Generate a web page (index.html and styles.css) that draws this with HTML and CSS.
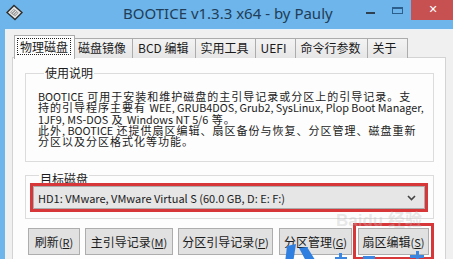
FILE: index.html
```html
<!DOCTYPE html>
<html lang="zh-CN">

<head>
    <meta charset="UTF-8">
    <meta name="viewport" content="width=device-width, initial-scale=1.0">
    <title>BOOTICE v1.3.3 x64 - by Pauly</title>
    <link rel="stylesheet" href="styles.css">
</head>

<body>
    <div class="window">
        <div class="titlebar">
            <svg class="app-icon" width="17" height="17" viewBox="0 0 17 17">
                <polygon points="1,8.5 8,1.5 16,8.5 9,15.5" fill="#e6e6e6" stroke="#2d2d2d" stroke-width="1.4"/>
                <polygon points="4,8.5 8,4.8 12.5,8.8 9,12.4" fill="#9a9a9a"/>
                <line x1="5.5" y1="8.5" x2="8.5" y2="5.8" stroke="#f4f4f4" stroke-width="0.9"/>
                <line x1="7" y1="9.8" x2="10" y2="7" stroke="#f4f4f4" stroke-width="0.9"/>
                <line x1="8.5" y1="11" x2="11.3" y2="8.4" stroke="#f4f4f4" stroke-width="0.9"/>
            </svg>
            <div class="title">BOOTICE v1.3.3 x64 - by Pauly</div>
            <div class="controls">
                <span class="ctl ctl-min"></span>
                <span class="ctl ctl-max"></span>
                <span class="ctl ctl-close">✕</span>
            </div>
        </div>

        <div class="client">
            <div class="tabs">
                <div class="tab active"><span class="focus">物理磁盘</span></div>
                <div class="tab">磁盘镜像</div>
                <div class="tab">BCD 编辑</div>
                <div class="tab">实用工具</div>
                <div class="tab">UEFI</div>
                <div class="tab">命令行参数</div>
                <div class="tab">关于</div>
            </div>

            <div class="panel">
                <div class="group group-info">
                    <div class="group-title">使用说明</div>
                    <p class="info"><span class="en">BOOTICE</span> 可用于安装和维护磁盘的主引导记录或分区上的引导记录。支<br>持的引导程序主要有 <span class="en">WEE, GRUB4DOS, Grub2, SysLinux, Plop Boot Manager,</span><br><span class="en">1JF9, MS-DOS</span> 及 <span class="en">Windows NT 5/6</span> 等。<br>此外<span class="en">, BOOTICE</span> 还提供扇区编辑、扇区备份与恢复、分区管理、磁盘重新<br>分区以及分区格式化等功能。</p>
                </div>

                <div class="group group-disk">
                    <div class="group-title">目标磁盘</div>
                    <div class="combo marked">
                        <span>HD1: VMware, VMware Virtual S (60.0 GB, D: E: F:)</span>
                        <svg class="chevron" width="9" height="6" viewBox="0 0 9 6">
                            <polyline points="1,1 4.5,4.5 8,1" fill="none" stroke="#444" stroke-width="1.6"/>
                        </svg>
                    </div>
                </div>

                <div class="buttons">
                    <button class="btn btn-refresh">刷新<span class="key">(<u>R</u>)</span></button>
                    <button class="btn btn-mbr">主引导记录<span class="key">(<u>M</u>)</span></button>
                    <button class="btn btn-pbr">分区引导记录<span class="key">(<u>P</u>)</span></button>
                    <button class="btn btn-parts">分区管理<span class="key">(<u>G</u>)</span></button>
                    <button class="btn btn-sector marked">扇区编辑<span class="key">(<u>S</u>)</span></button>
                </div>
            </div>

            <div class="watermark">Bai<span class="paw">du</span> 经验</div>
            <svg class="stamp" width="170" height="20" viewBox="0 0 170 20">
                <polygon points="2,3 11,1 8,20 0,20" fill="#2f7fe0"/>
                <polygon points="14,5 22,4 32,20 22,20" fill="#2f7fe0"/>
                <rect x="50" y="14" width="12" height="3" fill="#3b86e0"/>
                <rect x="54" y="10" width="3" height="10" fill="#3b86e0"/>
                <rect x="78" y="13" width="12" height="3" fill="#3b86e0"/>
                <rect x="125" y="12" width="14" height="3" fill="#3b86e0"/>
                <rect x="131" y="8" width="3" height="12" fill="#3b86e0"/>
            </svg>
        </div>
    </div>
</body>

</html>
```

FILE: styles.css
```css
body {
    margin: 0;
    background: #6db5ea;
    font-family: "Noto Sans CJK SC", "Noto Sans", sans-serif;
    font-size: 12px;
    color: #1b1b1b;
    overflow: hidden;
}

.window {
    height: 259px;
    display: flex;
    flex-direction: column;
}

.titlebar {
    height: 29px;
    flex: none;
    display: flex;
    align-items: flex-start;
}

.app-icon {
    margin: 4px 0 0 6px;
}

.title {
    margin: 3px 0 0 100px;
    font-family: "Noto Sans", sans-serif;
    font-size: 15px;
    line-height: 20px;
    color: #213d58;
    white-space: nowrap;
}

.controls {
    margin-left: auto;
    display: flex;
}

.ctl {
    display: block;
    height: 20px;
}

.ctl-min {
    width: 10px;
    margin-right: 17px;
    background: linear-gradient(#2f4150, #2f4150) center 12px / 9px 2px no-repeat;
}

.ctl-max {
    width: 11px;
    margin-right: 8px;
    background:
        linear-gradient(#2c5f8c, #2c5f8c) 0 7px / 11px 2px no-repeat,
        linear-gradient(#2c5f8c, #2c5f8c) 0 7px / 1px 7px no-repeat,
        linear-gradient(#2c5f8c, #2c5f8c) 10px 7px / 1px 7px no-repeat,
        linear-gradient(#2c5f8c, #2c5f8c) 0 13px / 11px 1px no-repeat;
}

.ctl-close {
    width: 42px;
    background: #c75150;
    color: #fff;
    font-family: "DejaVu Sans", sans-serif;
    font-size: 11px;
    line-height: 19px;
    text-align: center;
    text-indent: 2px;
}

.client {
    flex: 1;
    margin-left: 5px;
    background: #f0f0f0;
    border-top: 1px solid #e8f2fa;
    padding: 7px 0 0 7px;
    position: relative;
    overflow: hidden;
}

.tabs {
    display: flex;
    align-items: flex-end;
    height: 21px;
    padding-left: 4px;
    position: relative;
    z-index: 1;
}

.tab {
    box-sizing: border-box;
    min-width: 41px;
    height: 20px;
    padding: 0 6px 0 5px;
    line-height: 18px;
    white-space: nowrap;
    background: linear-gradient(#f3f3f3, #e6e6e6);
    border: 1px solid #acacac;
    border-bottom: none;
    margin-left: -1px;
}

.tab.active {
    height: 24px;
    margin: 0 -2px -1px -2px;
    padding: 3px 4px 0 3px;
    background: #fdfdfd;
    position: relative;
    z-index: 2;
}

.focus {
    display: block;
    outline: 1px dotted #222;
    padding: 0 2px;
    line-height: 15px;
}

.panel {
    width: 434px;
    box-sizing: border-box;
    height: 240px;
    margin-top: -1px;
    background: #fdfdfd;
    border: 1px solid #d3d3d3;
    padding: 0 11px 0 12px;
}

.group {
    border: 1px solid #dcdcdc;
    margin-top: 15px;
}

.group-title {
    width: fit-content;
    margin: -8px 0 0 6px;
    padding: 0 1px;
    line-height: 14px;
    background: #fdfdfd;
}

.group-info {
    padding: 0 4px 14px 12px;
}

.info {
    margin: 11px 0 0;
    font-size: 11px;
    letter-spacing: 1px;
    line-height: 11.3px;
    white-space: nowrap;
}

.en {
    font-size: 10.8px;
    letter-spacing: 0;
}

.group-disk {
    margin-top: 13px;
    padding: 4px 8px 9px 7px;
}

.combo {
    height: 23px;
    box-sizing: border-box;
    display: flex;
    align-items: center;
    justify-content: space-between;
    padding: 0 8px 0 4px;
    background: #e6e6e6;
    border: 1px solid #acacac;
    font-size: 11px;
}

.marked {
    outline: 3px solid #d8373a;
    outline-offset: 0;
}

.buttons {
    display: flex;
    gap: 5px;
    margin: 9px 0 0 3px;
}

.btn {
    height: 27px;
    padding: 0;
    font-family: inherit;
    font-size: 12px;
    color: #1b1b1b;
    background: #e1e1e1;
    border: 1px solid #adadad;
    white-space: nowrap;
}

.key {
    font-size: 11px;
}

.btn u {
    text-underline-offset: 1px;
}

.btn-refresh {
    width: 52px;
}

.btn-mbr {
    width: 88px;
}

.btn-pbr {
    width: 95px;
}

.btn-parts {
    width: 73px;
    margin-left: 1px;
}

.btn-sector {
    width: 71px;
    margin-left: 1px;
    outline-offset: 2px;
}

.watermark {
    position: absolute;
    left: 331px;
    top: 176px;
    font-family: "Liberation Sans", "Noto Sans CJK SC", sans-serif;
    font-size: 17px;
    font-weight: bold;
    color: rgba(190, 190, 190, 0.35);
    white-space: nowrap;
    pointer-events: none;
}

.stamp {
    position: absolute;
    left: 280px;
    top: 213px;
    pointer-events: none;
}
```
